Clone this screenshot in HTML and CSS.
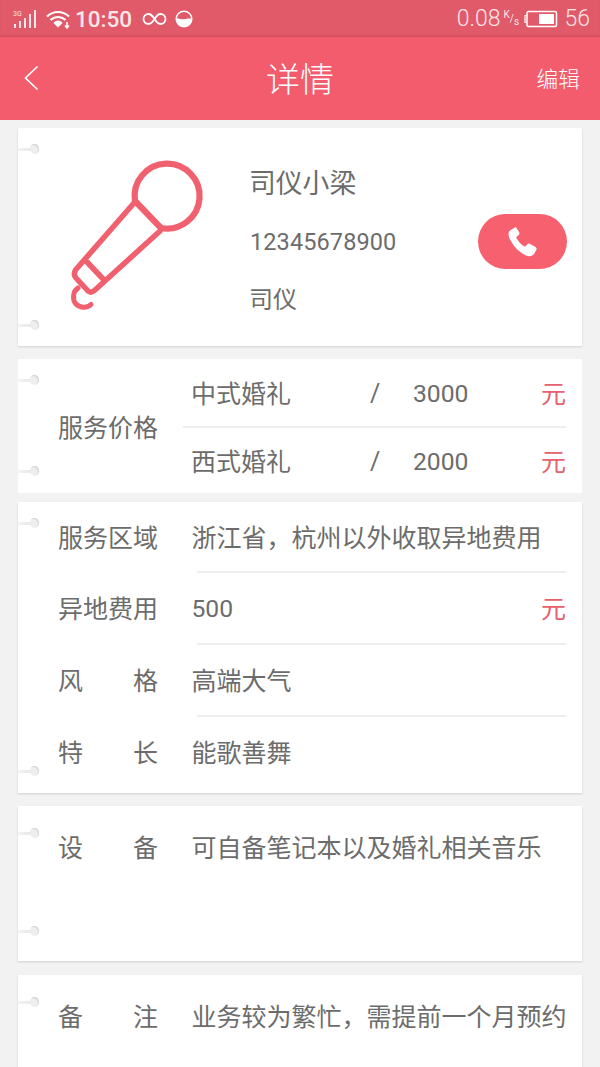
FILE: index.html
```html
<!DOCTYPE html>
<html lang="zh-CN">
<head>
<meta charset="utf-8">
<title>详情</title>
<link rel="stylesheet" href="styles.css">
</head>
<body>
<div class="status">
  <div class="status-left">
    <svg class="ic-signal" viewBox="0 0 26 20" width="26" height="20"><text x="0" y="7" class="net">3G</text><rect x="1" y="15" width="2" height="4"/><rect x="6" y="12" width="2" height="7"/><rect x="11" y="9" width="2" height="10"/><rect x="16" y="5" width="2" height="14"/><rect x="21" y="1" width="2" height="18"/></svg>
    <svg class="ic-wifi" viewBox="0 0 26 20" width="26" height="20"><path d="M1 7.500C7.500 1.500 16.500 1.500 23 7.500M4.500 11C9 7 15 7 19.500 11" fill="none" stroke="#fff" stroke-width="2.200"/><path d="M7.500 14C10.500 10.800 13.500 10.800 16.500 14L12 18.500Z" fill="#fff"/><path d="M21 13v5M19 16.500l2 2.500 2-2.500" fill="none" stroke="#fff" stroke-width="1.500"/></svg>
    <span class="time">10:50</span>
    <svg class="ic-inf" viewBox="0 0 25 14" width="25" height="14"><path d="M12.500 7C10 3 8.500 2 6.500 2a5 5 0 0 0 0 10c2 0 3.500-1 6-5s4-5 6-5a5 5 0 0 1 0 10c-2 0-3.500-1-6-5Z" fill="none" stroke="#fff" stroke-width="1.800"/></svg>
    <svg class="ic-moon" viewBox="0 0 18 18" width="18" height="18"><circle cx="9" cy="9" r="7.800" fill="none" stroke="#fff" stroke-width="1.400"/><path d="M1 9c3-1.500 5 .8 8 .3s5-1.300 8-.3a8 8 0 0 1-16 0Z" fill="#fff"/></svg>
  </div>
  <div class="status-right">
    <span class="speed">0.08</span>
    <span class="unit"><sup>K</sup>/<sub>s</sub></span>
    <svg class="ic-batt" viewBox="0 0 34 18" width="34" height="18"><rect x="3" y="1.500" width="29.500" height="15" rx="1.500" fill="none" stroke="#fff" stroke-width="1.500"/><rect x="15" y="4" width="15" height="10" fill="#fff"/><path d="M2.500 5.500H1v7h1.500" fill="none" stroke="#fff" stroke-width="1.200"/></svg>
    <span class="level">56</span>
  </div>
</div>

<header class="nav">
  <svg class="back" viewBox="0 0 18 28" width="18" height="28"><path d="M15.500 2.500 3.500 14l12 11.500" fill="none" stroke="#fff" stroke-width="1.700"/></svg>
  <h1 class="nav-title">详情</h1>
  <span class="nav-edit">编辑</span>
</header>

<main class="list">
  <section class="card card-profile">
    <i class="pin pin-a"></i><i class="pin pin-b"></i>
    <svg class="mic" viewBox="69 158 140 155" width="140" height="155">
      <g fill="none" stroke="#f0606f" stroke-linejoin="round" stroke-linecap="round">
        <path d="M135 201A32.500 32.500 0 1 1 161 228Z" stroke-width="6.200"/>
        <path d="M134 203 75.500 270Q73 275 76 278L88 291Q91 293.500 95 290L160 231" stroke-width="5.500"/>
        <path d="M87 262 104 280" stroke-width="5.500"/>
        <path d="M78 288C73 291 72 300 76 304 80 308 87 308.500 91 304.500" stroke-width="5"/>
      </g>
    </svg>
    <div class="person">
      <div class="person-name">司仪小梁</div>
      <div class="person-phone">12345678900</div>
      <div class="person-role">司仪</div>
    </div>
    <div class="call">
      <svg viewBox="0 0 32 32" width="34" height="34"><path d="M9 2.500 5 5C2.500 7 3 10.500 5 14c3 6 8 11 13.500 14 3.500 2 6.500 2 9-1l2-3.500c.5-1 .2-2-.8-2.700l-5-3c-1-.6-2-.4-2.700.4l-2 2.300c-3.500-1.500-7-5.500-8.500-9l2.300-2c.8-.7 1-1.700.5-2.700L11 3c-.5-1-1.200-1-2-.5Z" fill="#fff"/></svg>
    </div>
  </section>

  <section class="card card-price">
    <i class="pin pin-c"></i><i class="pin pin-d"></i>
    <div class="label">服务价格</div>
    <div class="prices">
      <div class="price-row">
        <span class="price-name">中式婚礼</span><span class="slash">/</span><span class="num">3000</span><span class="yuan">元</span>
      </div>
      <div class="price-row">
        <span class="price-name">西式婚礼</span><span class="slash">/</span><span class="num">2000</span><span class="yuan">元</span>
      </div>
    </div>
  </section>

  <section class="card card-info">
    <i class="pin pin-e"></i><i class="pin pin-f"></i>
    <div class="info-row">
      <div class="label">服务区域</div><div class="value">浙江省，杭州以外收取异地费用</div>
    </div>
    <div class="info-row">
      <div class="label">异地费用</div><div class="value num">500</div><span class="yuan">元</span>
    </div>
    <div class="info-row">
      <div class="label label-spread"><span>风</span><span>格</span></div><div class="value">高端大气</div>
    </div>
    <div class="info-row">
      <div class="label label-spread"><span>特</span><span>长</span></div><div class="value">能歌善舞</div>
    </div>
  </section>

  <section class="card card-text card-device">
    <i class="pin pin-g"></i><i class="pin pin-h"></i>
    <div class="label label-spread"><span>设</span><span>备</span></div>
    <div class="value">可自备笔记本以及婚礼相关音乐</div>
  </section>

  <section class="card card-text card-note">
    <i class="pin pin-i"></i>
    <div class="label label-spread"><span>备</span><span>注</span></div>
    <div class="value">业务较为繁忙，需提前一个月预约</div>
  </section>
</main>
</body>
</html>
```
FILE: styles.css
```css
* { box-sizing: border-box; }
html, body { margin: 0; padding: 0; }
body {
  width: 600px;
  height: 1067px;
  overflow: hidden;
  background: #f2f2f2;
  font-family: "Noto Sans CJK SC", "Roboto", sans-serif;
  color: #6c6c6c;
}
.status {
  height: 37px;
  background: #e05a69;
  box-shadow: inset 0 -2px 2px -1px rgba(170, 50, 65, .35);
  display: flex;
  justify-content: space-between;
  align-items: center;
  padding: 0 10px 0 13px;
  color: #fbe6e8;
  font-family: "Roboto", sans-serif;
}
.status-left, .status-right { display: flex; align-items: center; }
.ic-signal rect { fill: #fbe6e8; }
.net { font: 7px "Roboto", sans-serif; fill: #fbe6e8; }
.ic-wifi { margin-left: 7px; }
.time { font-size: 22.500px; font-weight: 500; margin-left: 3px; }
.ic-inf { margin-left: 10px; }
.ic-moon { margin-left: 8px; }
.speed { font-size: 23px; font-weight: 300; }
.unit { font-size: 10px; margin: 0 7px 0 3px; width: 14px; line-height: 1; white-space: nowrap; }
.unit sup, .unit sub { font-size: 10px; line-height: 0; }
.level { font-size: 23px; font-weight: 300; margin-left: 6px; }

.nav {
  height: 83px;
  background: #f35c6c;
  display: flex;
  align-items: center;
  justify-content: space-between;
  position: relative;
  padding: 0 20px 2px 22px;
  color: #fff;
}
.nav-title {
  margin: 0;
  font-size: 34px;
  font-weight: 300;
  line-height: 1;
  position: absolute;
  left: 266px;
  top: 24px;
}
.nav-edit { font-size: 21.700px; font-weight: 300; }

.list { padding: 8px 18px 0; display: flex; flex-direction: column; }
.card {
  position: relative;
  background: #fff;
  box-shadow: 0 1px 2px rgba(0, 0, 0, .14);
}
.pin {
  position: absolute;
  left: 0;
  width: 21px;
  height: 3px;
  margin-top: -1.500px;
  background: linear-gradient(to right, #f3f3f3, #e2e2e2);
  border-radius: 2px;
}
.pin::after {
  content: "";
  position: absolute;
  right: 0;
  top: -3.500px;
  width: 9px;
  height: 10px;
  border-radius: 50%;
  background: #eeeeee;
  box-shadow: inset -1px 1px 1px #d4d4d4;
}
.pin-a { top: 21px; }
.pin-b { top: 197px; }
.pin-c { top: 21px; }
.pin-d { top: 112px; }
.pin-e { top: 21px; }
.pin-f { top: 269px; }
.pin-g { top: 27px; }
.pin-h { top: 125px; }
.pin-i { top: 27px; }

.label { width: 100px; flex: none; font-size: 25px; line-height: 34px; white-space: nowrap; }
.label-spread { display: flex; justify-content: space-between; }
.value { font-size: 25px; line-height: 34px; white-space: nowrap; }
.num { font-family: "Roboto", sans-serif; font-size: 24.700px; padding-top: 3px; }
.yuan { color: #e8606e; font-size: 25px; line-height: 34px; margin-left: auto; }

.card-profile { height: 218px; display: flex; align-items: flex-start; padding-left: 51px; }
.mic { margin-top: 30px; flex: none; }
.person { margin-left: 40px; margin-top: 35px; flex: none; }
.person-name { font-size: 26.800px; line-height: 38px; }
.person-phone { font-family: "Roboto", sans-serif; font-size: 23.500px; line-height: 38px; margin-top: 22px; padding-left: 1px; letter-spacing: .1px; }
.person-role { font-size: 24px; line-height: 38px; margin-top: 18px; }
.call {
  position: absolute;
  left: 460px;
  top: 86px;
  width: 89px;
  height: 55px;
  border-radius: 28px;
  background: #f6606f;
  display: flex;
  align-items: center;
  justify-content: center;
  padding-right: 2px;
}

.card-price { height: 134px; margin-top: 13px; display: flex; align-items: center; padding-left: 40px; box-shadow: none; }
.card-price .label { margin-top: -1px; }
.prices { flex: 1; margin-left: 25px; margin-right: 16px; }
.price-row { height: 67px; display: flex; align-items: center; padding: 0 0 2px 8px; }
.price-row + .price-row { border-top: 2px solid #eee; }
.price-name { font-size: 25px; width: 179px; white-space: nowrap; line-height: 34px; }
.slash { font-family: "Roboto", sans-serif; font-size: 25px; width: 43px; padding-top: 3px; }

.card-info { height: 291px; margin-top: 9px; padding: 0 16px 0 40px; }
.info-row { height: 72px; display: flex; align-items: center; position: relative; padding-bottom: 2px; }
.info-row:first-of-type { height: 70px; }
.info-row .value { margin-left: 33.500px; }
.info-row + .info-row::before {
  content: "";
  position: absolute;
  left: 139px;
  right: 0;
  top: -1px;
  height: 2px;
  background: #eee;
}

.card-text { display: flex; align-items: flex-start; padding: 23px 16px 0 40px; }
.card-text .value { margin-left: 33.500px; }
.card-device { height: 155px; margin-top: 13px; }
.card-note { height: 120px; margin-top: 14px; }
```
